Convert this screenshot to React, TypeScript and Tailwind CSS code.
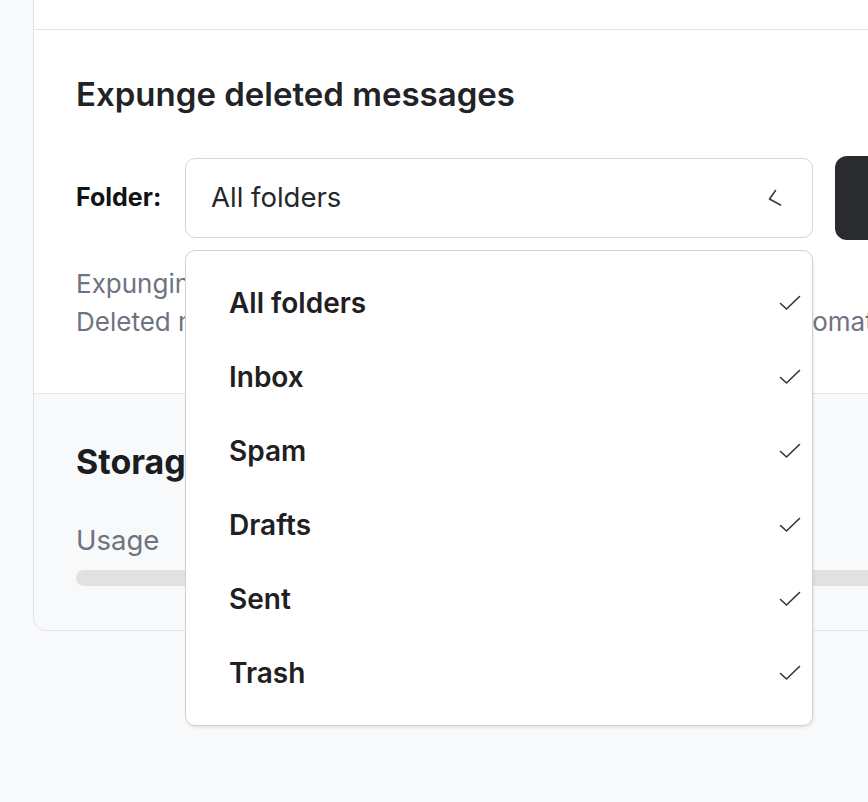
import { useState } from "react";

const FOLDERS = ["All folders", "Inbox", "Spam", "Drafts", "Sent", "Trash"];

export default function App() {
  const [folder, setFolder] = useState("All folders");
  const [open, setOpen] = useState(true);

  return (
    <div
      className="min-h-screen overflow-hidden bg-[#f8f9fb] pl-[33px]"
      style={{ fontFamily: "Inter, 'Noto Sans', sans-serif" }}
    >
      <div className="w-[1000px] rounded-bl-[14px] border-b border-l border-[#e2e3e6] bg-white">
        <div className="h-[30px] border-b border-[#e4e5e8]" />

        <section className="px-[42px] pt-[44px] pb-[52px]">
          <h2 className="text-[33px] leading-[40px] font-semibold text-[#222326]">
            Expunge deleted messages
          </h2>

          <div className="mt-[42px] flex items-center">
            <label className="w-[109px] shrink-0 text-[25px] font-bold text-[#111214]">Folder:</label>
            <div className="relative">
              <button
                onClick={() => setOpen((v) => !v)}
                className="flex h-[80px] w-[628px] items-center justify-between rounded-[10px] border border-[#d3d5d9] bg-white pl-[25px] pr-[30px] text-left text-[27.5px] text-[#26272b]"
              >
                <span>{folder}</span>
                <svg width="14" height="18" viewBox="0 0 14 18" fill="none" className="mb-[1px]">
                  <path d="M7.5 1.5 L1.5 10 L12.5 16" stroke="#3a3b3f" strokeWidth="1.6" strokeLinecap="round" strokeLinejoin="round" />
                </svg>
              </button>

              {open && (
                <ul className="absolute top-[92px] left-0 z-10 w-[628px] rounded-[10px] border border-[#cfd1d5] bg-white py-[15px] shadow-[1px_2px_3px_rgba(0,0,0,0.08)]">
                  {FOLDERS.map((f) => (
                    <li key={f}>
                      <button
                        onClick={() => {
                          setFolder(f);
                          setOpen(false);
                        }}
                        className="flex h-[74px] w-full items-center justify-between pl-[43px] pr-[11px] text-left text-[28px] font-semibold text-[#1f2023]"
                      >
                        <span>{f}</span>
                        <svg width="22" height="16" viewBox="0 0 22 16" fill="none">
                          <path d="M1.5 8.5 L7.5 14 L20.5 1.5" stroke="#333438" strokeWidth="1.6" strokeLinecap="round" strokeLinejoin="round" />
                        </svg>
                      </button>
                    </li>
                  ))}
                </ul>
              )}
            </div>
            <button className="ml-[22px] h-[84px] w-[220px] shrink-0 rounded-[12px] bg-[#2a2b2e] pl-[60px] text-left text-[25px] font-semibold text-white">
              Run
            </button>
          </div>

          <p className="mt-[25px] text-[26px] leading-[38px] whitespace-nowrap text-[#6e7380]">
            Expunging removes messages marked as deleted.
            <br />
            Deleted messages are also permanently removed by the automated job.
          </p>
        </section>

        <section className="h-[237px] rounded-bl-[13px] border-t border-[#e4e5e8] bg-[#f8f9fb] px-[42px] pt-[48px]">
          <h2 className="text-[34px] leading-[40px] font-bold text-[#1c1d20]">Storage</h2>
          <p className="mt-[40px] text-[27.5px] leading-[36px] text-[#6e7380]">Usage</p>
          <div className="mt-[12px] h-[16px] w-[900px] rounded-full bg-[#e1e1e2]" />
        </section>
      </div>
    </div>
  );
}
